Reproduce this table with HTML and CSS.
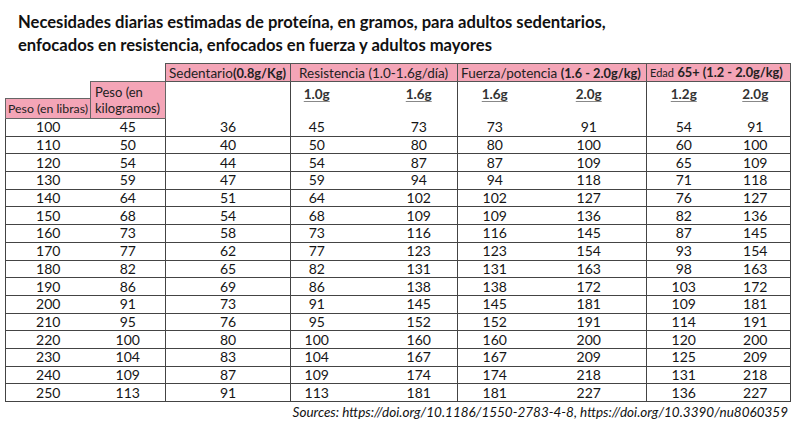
FILE: index.html
```html
<!DOCTYPE html>
<html lang="es">
<head>
<meta charset="utf-8">
<title>Necesidades diarias de proteína</title>
<link rel="stylesheet" href="styles.css">
</head>
<body>
<div class="page">
  <h1 class="title">Necesidades diarias estimadas de proteína, en gramos, para adultos sedentarios,<br>enfocados en resistencia, enfocados en fuerza y adultos mayores</h1>
  <table class="grid">
    <colgroup>
      <col class="w-a"><col class="w-b"><col class="w-c"><col class="w-d"><col class="w-e"><col class="w-f"><col class="w-g"><col class="w-h"><col class="w-i">
    </colgroup>
    <thead>
      <tr class="h1">
        <td rowspan="2" class="blank"></td>
        <td class="blank"></td>
        <th class="grp">Sedentario<b>(0.8g/Kg)</b></th>
        <th class="grp ind" colspan="2">Resistencia (1.0-1.6g/día)</th>
        <th class="grp" colspan="2">Fuerza/potencia <b>(1.6 - 2.0g/kg)</b></th>
        <th class="grp" colspan="2"><span class="small">Edad</span> <b>65+ (1.2 - 2.0g/kg)</b></th>
      </tr>
      <tr class="h2">
        <th rowspan="2" class="pink kg">Peso (en<br>kilogramos)</th>
        <td rowspan="2" class="sub vl"></td>
        <td rowspan="2" class="sub vl"><u>1.0g</u></td>
        <td rowspan="2" class="sub pad"><u>1.6g</u></td>
        <td rowspan="2" class="sub vl"><u>1.6g</u></td>
        <td rowspan="2" class="sub"><u>2.0g</u></td>
        <td rowspan="2" class="sub vl"><u>1.2g</u></td>
        <td rowspan="2" class="sub vr"><u>2.0g</u></td>
      </tr>
      <tr class="h3">
        <th class="pink lb">Peso (en libras)</th>
      </tr>
    </thead>
    <tbody>
      <tr><td class="vl">100</td><td>45</td><td class="vl">36</td><td class="vl">45</td><td class="pad">73</td><td class="vl">73</td><td>91</td><td class="vl">54</td><td class="vr">91</td></tr>
      <tr><td class="vl">110</td><td>50</td><td class="vl">40</td><td class="vl">50</td><td class="pad">80</td><td class="vl">80</td><td>100</td><td class="vl">60</td><td class="vr">100</td></tr>
      <tr><td class="vl">120</td><td>54</td><td class="vl">44</td><td class="vl">54</td><td class="pad">87</td><td class="vl">87</td><td>109</td><td class="vl">65</td><td class="vr">109</td></tr>
      <tr><td class="vl">130</td><td>59</td><td class="vl">47</td><td class="vl">59</td><td class="pad">94</td><td class="vl">94</td><td>118</td><td class="vl">71</td><td class="vr">118</td></tr>
      <tr><td class="vl">140</td><td>64</td><td class="vl">51</td><td class="vl">64</td><td class="pad">102</td><td class="vl">102</td><td>127</td><td class="vl">76</td><td class="vr">127</td></tr>
      <tr><td class="vl">150</td><td>68</td><td class="vl">54</td><td class="vl">68</td><td class="pad">109</td><td class="vl">109</td><td>136</td><td class="vl">82</td><td class="vr">136</td></tr>
      <tr><td class="vl">160</td><td>73</td><td class="vl">58</td><td class="vl">73</td><td class="pad">116</td><td class="vl">116</td><td>145</td><td class="vl">87</td><td class="vr">145</td></tr>
      <tr><td class="vl">170</td><td>77</td><td class="vl">62</td><td class="vl">77</td><td class="pad">123</td><td class="vl">123</td><td>154</td><td class="vl">93</td><td class="vr">154</td></tr>
      <tr><td class="vl">180</td><td>82</td><td class="vl">65</td><td class="vl">82</td><td class="pad">131</td><td class="vl">131</td><td>163</td><td class="vl">98</td><td class="vr">163</td></tr>
      <tr><td class="vl">190</td><td>86</td><td class="vl">69</td><td class="vl">86</td><td class="pad">138</td><td class="vl">138</td><td>172</td><td class="vl">103</td><td class="vr">172</td></tr>
      <tr><td class="vl">200</td><td>91</td><td class="vl">73</td><td class="vl">91</td><td class="pad">145</td><td class="vl">145</td><td>181</td><td class="vl">109</td><td class="vr">181</td></tr>
      <tr><td class="vl">210</td><td>95</td><td class="vl">76</td><td class="vl">95</td><td class="pad">152</td><td class="vl">152</td><td>191</td><td class="vl">114</td><td class="vr">191</td></tr>
      <tr><td class="vl">220</td><td>100</td><td class="vl">80</td><td class="vl">100</td><td class="pad">160</td><td class="vl">160</td><td>200</td><td class="vl">120</td><td class="vr">200</td></tr>
      <tr><td class="vl">230</td><td>104</td><td class="vl">83</td><td class="vl">104</td><td class="pad">167</td><td class="vl">167</td><td>209</td><td class="vl">125</td><td class="vr">209</td></tr>
      <tr><td class="vl">240</td><td>109</td><td class="vl">87</td><td class="vl">109</td><td class="pad">174</td><td class="vl">174</td><td>218</td><td class="vl">131</td><td class="vr">218</td></tr>
      <tr><td class="vl">250</td><td>113</td><td class="vl">91</td><td class="vl">113</td><td class="pad">181</td><td class="vl">181</td><td>227</td><td class="vl">136</td><td class="vr">227</td></tr>
    </tbody>
  </table>
  <p class="sources">Sources: https://doi.org/10.1186/1550-2783-4-8, https://doi.org/10.3390/nu8060359</p>
</div>
</body>
</html>
```

FILE: styles.css
```css
html, body {
  margin: 0;
  padding: 0;
  background: #ffffff;
}

.page {
  width: 800px;
  height: 430px;
  padding: 11px 0 0 5px;
  box-sizing: border-box;
  font-family: Lato, "Liberation Sans", sans-serif;
  color: #151515;
}

.title {
  margin: 0 0 6px 13px;
  font-size: 16.6px;
  line-height: 23px;
  font-weight: 700;
  color: #111;
}

.grid {
  border-collapse: collapse;
  table-layout: fixed;
  width: 785px;
  font-size: 14px;
}

.w-a { width: 85px; }
.w-b { width: 75px; }
.w-c { width: 125px; }
.w-d { width: 52px; }
.w-e { width: 115px; }
.w-f { width: 74px; }
.w-g { width: 115px; }
.w-h { width: 74px; }
.w-i { width: 70px; }

.grid td, .grid th {
  padding: 0;
  text-align: center;
  font-weight: 400;
}

.h1 { height: 18px; }
.h2 { height: 17px; }
.h3 { height: 20px; }

.grid .grp {
  background: #f4a5b7;
  border: 1px solid #555;
  text-align: left;
  padding-left: 3px;
  font-size: 13.5px;
  line-height: 16px;
  white-space: nowrap;
  overflow: hidden;
  color: #222;
}

.grid .ind { padding-left: 8px; }

.grp b {
  font-weight: 700;
  font-size: 12.8px;
}

.grp .small { font-size: 11px; }

.grid .pink {
  background: #f4a5b7;
  border: 1px solid #666;
  text-align: left;
  font-size: 13px;
  line-height: 16px;
  color: #222;
}

.grid .kg {
  vertical-align: top;
  padding: 2px 0 0 4px;
}

.grid .lb {
  vertical-align: bottom;
  padding: 0 0 1px 2px;
  white-space: nowrap;
  font-size: 12.3px;
}

.grid .sub {
  vertical-align: top;
  font-weight: 700;
  padding-top: 4px;
  font-size: 13.5px;
  line-height: 16px;
  color: #333;
}

.sub u {
  text-decoration-color: #888;
  text-underline-offset: 2px;
}

.grid tbody tr { height: 17.7px; }

.grid tbody td {
  border-bottom: 1px solid #444;
  line-height: 16px;
}

.grid .vl { border-left: 1px solid #444; }
.grid .vr { border-right: 1px solid #444; }
.grid .pad { padding-left: 38px; }

.sources {
  margin: 2px 0 0 0;
  width: 783px;
  text-align: right;
  font-style: italic;
  font-size: 13.5px;
  color: #111;
}
```
